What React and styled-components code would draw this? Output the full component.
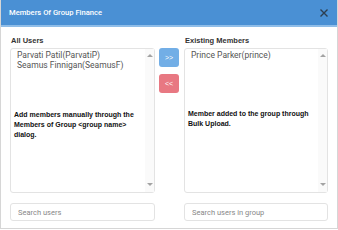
import React, { useState } from 'react'
import styled, { createGlobalStyle } from 'styled-components'

const GlobalStyle = createGlobalStyle`
  html, body {
    margin: 0;
    padding: 0;
    background: #ffffff;
  }
  body {
    font-family: "Liberation Sans", Arial, sans-serif;
  }
`

const Dialog = styled.div`
  width: 336px;
  height: 228px;
  border: 1px solid #d6d6d6;
  border-top: none;
  background: #fff;
  display: flex;
  flex-direction: column;
`

const Header = styled.div`
  height: 25px;
  background: #4a90d4;
  border-bottom: 2px solid #8fbde8;
  display: flex;
  align-items: center;
  justify-content: space-between;
  padding: 0 8px 0 8px;
`

const Title = styled.span`
  color: #fff;
  font-size: 7.6px;
  font-weight: 500;
  font-family: Roboto, "Liberation Sans", sans-serif;
`

const Close = styled.button`
  border: none;
  background: none;
  padding: 0;
  width: 10px;
  height: 10px;
  display: flex;
  cursor: pointer;
`

const Body = styled.div`
  display: grid;
  grid-template-columns: 145px 29px 144px;
  padding: 10px 0 0 9px;
`

const Column = styled.div`
  display: flex;
  flex-direction: column;
`

const Label = styled.div`
  font-size: 7.5px;
  font-weight: bold;
  color: #333;
  height: 8px;
  line-height: 8px;
  padding-left: 1px;
  margin-bottom: 3px;
`

const ListBox = styled.div`
  height: 143px;
  border: 1px solid #e3e3e3;
  border-radius: 3px;
  display: flex;
  font-family: Roboto, "Liberation Sans", sans-serif;
`

const ListContent = styled.div`
  flex: 1;
  padding: 1px 0 0 6px;
`

const Item = styled.div`
  font-size: 8.5px;
  color: #555;
  line-height: 10px;
`

const Note = styled.div`
  font-family: "Liberation Sans", Arial, sans-serif;
  font-size: 7px;
  font-weight: bold;
  color: #111;
  line-height: 10px;
  margin-top: ${p => p.$top}px;
  margin-left: -3px;
`

const Scrollbar = styled.div`
  width: 9px;
  background: #fafafa;
  display: flex;
  flex-direction: column;
  justify-content: space-between;
  align-items: center;
  padding: 5px 0 6px;
`

const Arrow = styled.div`
  width: 0;
  height: 0;
  border-left: 3px solid transparent;
  border-right: 3px solid transparent;
  ${p => (p.$down
    ? 'border-top: 3px solid #a3a3a3;'
    : 'border-bottom: 3px solid #a3a3a3;')}
`

const Buttons = styled.div`
  display: flex;
  flex-direction: column;
  gap: 7px;
  padding: 11px 0 0 4px;
`

const MoveButton = styled.button`
  width: 20px;
  height: 19px;
  border: none;
  border-radius: 3px;
  background: ${p => p.$color};
  color: #fff;
  font-size: 7px;
  font-family: "Liberation Sans", Arial, sans-serif;
  padding: 0;
  cursor: pointer;
`

const Search = styled.input`
  margin-top: 10px;
  height: 18px;
  box-sizing: border-box;
  border: 1px solid #e3e3e3;
  border-radius: 3px;
  padding: 0 7px;
  font-size: 7.5px;
  font-family: Roboto, "Liberation Sans", sans-serif;
  color: #555;
  outline: none;

  &::placeholder {
    color: #888;
  }
`

const List = ({ items, note, noteTop }) => (
  <ListBox>
    <ListContent>
      {items.map(item => <Item key={item}>{item}</Item>)}
      <Note $top={noteTop}>{note}</Note>
    </ListContent>
    <Scrollbar>
      <Arrow />
      <Arrow $down />
    </Scrollbar>
  </ListBox>
)

const App = () => {
  const [allUsers] = useState(['Parvati Patil(ParvatiP)', 'Seamus Finnigan(SeamusF)'])
  const [members] = useState(['Prince Parker(prince)'])

  return (
    <>
      <GlobalStyle />
      <Dialog>
        <Header>
          <Title>Members Of Group Finance</Title>
          <Close aria-label="close">
            <svg width="10" height="10" viewBox="0 0 10 10">
              <path d="M1.5 1.5 L8.5 8.5 M8.5 1.5 L1.5 8.5" stroke="#2d3e50" strokeWidth="1.4" />
            </svg>
          </Close>
        </Header>
        <Body>
          <Column>
            <Label>All Users</Label>
            <List
              items={allUsers}
              noteTop={40}
              note="Add members manually through the Members of Group <group name> dialog."
            />
            <Search placeholder="Search users" />
          </Column>
          <Buttons>
            <MoveButton $color="#72aee6">&gt;&gt;</MoveButton>
            <MoveButton $color="#e87882">&lt;&lt;</MoveButton>
          </Buttons>
          <Column>
            <Label>Existing Members</Label>
            <List
              items={members}
              noteTop={49}
              note="Member added to the group through Bulk Upload."
            />
            <Search placeholder="Search users in group" />
          </Column>
        </Body>
      </Dialog>
    </>
  )
}

export default App
